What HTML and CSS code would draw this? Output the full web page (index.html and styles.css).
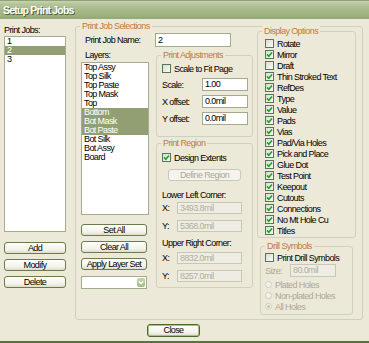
FILE: index.html
```html
<!DOCTYPE html>
<html lang="en">
<head>
    <meta charset="UTF-8">
    <title>Setup Print Jobs</title>
    <link rel="stylesheet" href="styles.css">
</head>
<body>
<div class="window">
    <div class="titlebar">Setup Print Jobs</div>

    <div class="content">
        <!-- print job list -->
        <div class="jobs-col">
            <div class="label">Print Jobs:</div>
            <div class="listbox jobs-list">
                <div class="item">1</div>
                <div class="item sel">2</div>
                <div class="item">3</div>
            </div>
            <div class="btn-stack">
                <div class="btn">Add</div>
                <div class="btn">Modify</div>
                <div class="btn">Delete</div>
            </div>
        </div>

        <div class="group main-group">
            <span class="group-title">Print Job Selections</span>

            <div class="left-area">
                <div class="name-row">
                    <span class="label name-label">Print Job Name:</span>
                    <div class="field name-field">2</div>
                </div>

                <div class="split">
                    <div class="layers-col">
                        <div class="label layers-label">Layers:</div>
                        <div class="listbox layers-list">
                            <div class="item">Top Assy</div>
                            <div class="item">Top Silk</div>
                            <div class="item">Top Paste</div>
                            <div class="item">Top Mask</div>
                            <div class="item">Top</div>
                            <div class="item sel">Bottom</div>
                            <div class="item sel">Bot Mask</div>
                            <div class="item sel">Bot Paste</div>
                            <div class="item">Bot Silk</div>
                            <div class="item">Bot Assy</div>
                            <div class="item">Board</div>
                        </div>
                        <div class="btn layer-btn first">Set All</div>
                        <div class="btn layer-btn">Clear All</div>
                        <div class="btn layer-btn">Apply Layer Set</div>
                        <div class="combo">
                            <span class="combo-arrow">
                                <svg width="6" height="5" viewBox="0 0 6 5"><path d="M0.8 1.2 L3 3.6 L5.2 1.2" fill="none" stroke="#fff" stroke-width="1.4"/></svg>
                            </span>
                        </div>
                    </div>

                    <div class="mid-col">
                        <div class="group adjust-group">
                            <span class="group-title">Print Adjustments</span>
                            <div class="check-row">
                                <span class="cb"></span>Scale to Fit Page
                            </div>
                            <div class="field-row">
                                <span class="row-label">Scale:</span>
                                <div class="field small-field">1.00</div>
                            </div>
                            <div class="field-row">
                                <span class="row-label">X offset:</span>
                                <div class="field small-field">0.0mil</div>
                            </div>
                            <div class="field-row">
                                <span class="row-label">Y offset:</span>
                                <div class="field small-field">0.0mil</div>
                            </div>
                        </div>

                        <div class="group region-group">
                            <span class="group-title">Print Region</span>
                            <div class="check-row">
                                <span class="cb on"><svg width="7" height="7" viewBox="0 0 7 7"><path d="M1 3.4 L2.8 5.2 L6 1.4" fill="none" stroke="#21a121" stroke-width="1.6"/></svg></span>Design Extents
                            </div>
                            <div class="btn disabled define-btn">Define Region</div>
                            <div class="label corner-label">Lower Left Corner:</div>
                            <div class="coord-row first">
                                <span class="coord-label">X:</span>
                                <div class="field disabled coord-field">3493.8mil</div>
                            </div>
                            <div class="coord-row">
                                <span class="coord-label">Y:</span>
                                <div class="field disabled coord-field">5368.0mil</div>
                            </div>
                            <div class="label corner-label upper">Upper Right Corner:</div>
                            <div class="coord-row second">
                                <span class="coord-label">X:</span>
                                <div class="field disabled coord-field">8832.0mil</div>
                            </div>
                            <div class="coord-row">
                                <span class="coord-label">Y:</span>
                                <div class="field disabled coord-field">8257.0mil</div>
                            </div>
                        </div>
                    </div>
                </div>
            </div>

            <div class="right-area">
                <div class="group display-group">
                    <span class="group-title">Display Options</span>
                    <div class="opt"><span class="cb"></span>Rotate</div>
                    <div class="opt"><span class="cb on"><svg width="7" height="7" viewBox="0 0 7 7"><path d="M1 3.4 L2.8 5.2 L6 1.4" fill="none" stroke="#21a121" stroke-width="1.6"/></svg></span>Mirror</div>
                    <div class="opt"><span class="cb"></span>Draft</div>
                    <div class="opt"><span class="cb on"><svg width="7" height="7" viewBox="0 0 7 7"><path d="M1 3.4 L2.8 5.2 L6 1.4" fill="none" stroke="#21a121" stroke-width="1.6"/></svg></span>Thin Stroked Text</div>
                    <div class="opt"><span class="cb on"><svg width="7" height="7" viewBox="0 0 7 7"><path d="M1 3.4 L2.8 5.2 L6 1.4" fill="none" stroke="#21a121" stroke-width="1.6"/></svg></span>RefDes</div>
                    <div class="opt"><span class="cb on"><svg width="7" height="7" viewBox="0 0 7 7"><path d="M1 3.4 L2.8 5.2 L6 1.4" fill="none" stroke="#21a121" stroke-width="1.6"/></svg></span>Type</div>
                    <div class="opt"><span class="cb on"><svg width="7" height="7" viewBox="0 0 7 7"><path d="M1 3.4 L2.8 5.2 L6 1.4" fill="none" stroke="#21a121" stroke-width="1.6"/></svg></span>Value</div>
                    <div class="opt"><span class="cb on"><svg width="7" height="7" viewBox="0 0 7 7"><path d="M1 3.4 L2.8 5.2 L6 1.4" fill="none" stroke="#21a121" stroke-width="1.6"/></svg></span>Pads</div>
                    <div class="opt"><span class="cb on"><svg width="7" height="7" viewBox="0 0 7 7"><path d="M1 3.4 L2.8 5.2 L6 1.4" fill="none" stroke="#21a121" stroke-width="1.6"/></svg></span>Vias</div>
                    <div class="opt"><span class="cb on"><svg width="7" height="7" viewBox="0 0 7 7"><path d="M1 3.4 L2.8 5.2 L6 1.4" fill="none" stroke="#21a121" stroke-width="1.6"/></svg></span>Pad/Via Holes</div>
                    <div class="opt"><span class="cb on"><svg width="7" height="7" viewBox="0 0 7 7"><path d="M1 3.4 L2.8 5.2 L6 1.4" fill="none" stroke="#21a121" stroke-width="1.6"/></svg></span>Pick and Place</div>
                    <div class="opt"><span class="cb on"><svg width="7" height="7" viewBox="0 0 7 7"><path d="M1 3.4 L2.8 5.2 L6 1.4" fill="none" stroke="#21a121" stroke-width="1.6"/></svg></span>Glue Dot</div>
                    <div class="opt"><span class="cb on"><svg width="7" height="7" viewBox="0 0 7 7"><path d="M1 3.4 L2.8 5.2 L6 1.4" fill="none" stroke="#21a121" stroke-width="1.6"/></svg></span>Test Point</div>
                    <div class="opt"><span class="cb on"><svg width="7" height="7" viewBox="0 0 7 7"><path d="M1 3.4 L2.8 5.2 L6 1.4" fill="none" stroke="#21a121" stroke-width="1.6"/></svg></span>Keepout</div>
                    <div class="opt"><span class="cb on"><svg width="7" height="7" viewBox="0 0 7 7"><path d="M1 3.4 L2.8 5.2 L6 1.4" fill="none" stroke="#21a121" stroke-width="1.6"/></svg></span>Cutouts</div>
                    <div class="opt"><span class="cb on"><svg width="7" height="7" viewBox="0 0 7 7"><path d="M1 3.4 L2.8 5.2 L6 1.4" fill="none" stroke="#21a121" stroke-width="1.6"/></svg></span>Connections</div>
                    <div class="opt"><span class="cb on"><svg width="7" height="7" viewBox="0 0 7 7"><path d="M1 3.4 L2.8 5.2 L6 1.4" fill="none" stroke="#21a121" stroke-width="1.6"/></svg></span>No Mt Hole Cu</div>
                    <div class="opt"><span class="cb on"><svg width="7" height="7" viewBox="0 0 7 7"><path d="M1 3.4 L2.8 5.2 L6 1.4" fill="none" stroke="#21a121" stroke-width="1.6"/></svg></span>Titles</div>
                </div>

                <div class="group drill-group">
                    <span class="group-title">Drill Symbols</span>
                    <div class="check-row"><span class="cb"></span>Print Drill Symbols</div>
                    <div class="size-row">
                        <span class="size-label">Size:</span>
                        <div class="field disabled small-field">80.0mil</div>
                    </div>
                    <div class="radio-row"><span class="rb"></span>Plated Holes</div>
                    <div class="radio-row"><span class="rb"></span>Non-plated Holes</div>
                    <div class="radio-row"><span class="rb on"></span>All Holes</div>
                </div>
            </div>
        </div>
    </div>

    <div class="footer">
        <div class="btn default">Close</div>
    </div>
</div>
</body>
</html>
```

FILE: styles.css
```css
* {
    box-sizing: border-box;
}
body {
    margin: 0;
    font-family: "Liberation Sans", Arial, sans-serif;
    font-size: 9px;
    letter-spacing: -0.6px;
    color: #000;
}
.window {
    width: 369px;
    height: 343px;
    background-color: #ece9d8;
    border-bottom: 2px solid #587240;
    display: flex;
    flex-direction: column;
}
.titlebar {
    height: 19px;
    flex: none;
    padding: 1px 3px 0;
    line-height: 18px;
    font-size: 10.5px;
    font-weight: bold;
    letter-spacing: -0.8px;
    color: #fff;
    text-shadow: 1px 1px 0 #4f603a;
    background: linear-gradient(to bottom, #55703a 0, #c8d4b0 1px, #b4c59a 4px, #a6b98a 10px, #9bb07e 16px, #92a875 19px);
}
.content {
    display: flex;
    gap: 9px;
    padding: 7px 6px 0 4px;
}

/* lists */
.label {
    line-height: 10px;
}
.listbox {
    background-color: #fff;
    border: 1px solid #a5ac93;
}
.item {
    height: 9px;
    line-height: 9px;
    padding-left: 2px;
    white-space: nowrap;
}
.item.sel {
    background-color: #919f73;
    color: #fff;
}

/* left column */
.jobs-col {
    width: 62px;
    display: flex;
    flex-direction: column;
}
.jobs-col .label {
    margin-top: -1px;
}
.jobs-list {
    height: 196px;
    margin-top: 1px;
}
.btn-stack {
    display: flex;
    flex-direction: column;
    gap: 5px;
    margin-top: 10px;
}

/* buttons */
.btn {
    height: 12px;
    line-height: 10px;
    text-align: center;
    border: 1px solid #6b7b4e;
    border-radius: 3px;
    background: linear-gradient(to bottom, #fefefb 0%, #f3f2ea 70%, #dedbcc 100%);
    white-space: nowrap;
}
.btn.disabled {
    border-color: #cac8bb;
    background: #f4f3ec;
    color: #aca899;
}
.btn.default {
    width: 53px;
    height: 13px;
    line-height: 11px;
    margin-left: 147px;
    border-color: #4d6a2d;
    box-shadow: inset 0 0 0 1px #a9c17d;
}

/* group boxes */
.group {
    position: relative;
    border: 1px solid #d0d0bf;
    border-radius: 3px;
}
.group-title {
    position: absolute;
    top: -6px;
    left: 4px;
    padding: 0 2px;
    line-height: 10px;
    color: #c07a40;
    background-color: #ece9d8;
    white-space: nowrap;
}
.main-group {
    width: 288px;
    height: 294px;
    display: flex;
    gap: 4px;
    padding: 4px 6px 0 5px;
}
.left-area {
    width: 172px;
    padding-top: 2px;
}
.name-row {
    display: flex;
    align-items: center;
    height: 14px;
}
.name-label {
    width: 74px;
    padding-left: 4px;
}
.field {
    background-color: #fff;
    border: 1px solid #a2ab8e;
    padding-left: 2px;
    white-space: nowrap;
}
.field.disabled {
    background-color: #efede3;
    border-color: #c6c7b6;
    color: #b0ad9e;
}
.name-field {
    width: 76px;
    height: 14px;
    line-height: 12px;
}
.split {
    display: flex;
    gap: 7px;
    margin-top: 3px;
}

/* layers */
.layers-col {
    width: 68px;
    display: flex;
    flex-direction: column;
}
.layers-label {
    padding-left: 4px;
}
.layers-list {
    height: 153px;
    margin-top: 2px;
}
.layer-btn {
    width: 66px;
    margin-top: 5px;
}
.layer-btn.first {
    margin-top: 9px;
}
.combo {
    width: 66px;
    height: 13px;
    margin-top: 6px;
    border: 1px solid #a2ab8e;
    background-color: #fff;
    display: flex;
    justify-content: flex-end;
    padding: 1px;
}
.combo-arrow {
    width: 8px;
    display: flex;
    align-items: center;
    justify-content: center;
    background: linear-gradient(to bottom, #c4d4ac, #a4bb85);
    border-radius: 2px;
}

/* middle column */
.mid-col {
    width: 97px;
    padding-top: 5px;
}
.check-row {
    display: flex;
    align-items: center;
    gap: 3px;
    height: 9px;
    white-space: nowrap;
}
.cb {
    width: 9px;
    height: 9px;
    flex: none;
    border: 1px solid #577659;
    background: linear-gradient(135deg, #dcdbd2, #fbfbf8);
    display: flex;
    align-items: center;
    justify-content: center;
}
.adjust-group {
    height: 82px;
    padding: 8px 0 0 5px;
}
.field-row {
    display: flex;
    align-items: center;
    margin-top: 4px;
}
.adjust-group .field-row:nth-of-type(2) {
    margin-top: 5px;
}
.row-label {
    width: 40px;
    white-space: nowrap;
}
.small-field {
    width: 46px;
    height: 13px;
    line-height: 11px;
}
.region-group {
    height: 145px;
    margin-top: 6px;
    padding: 9px 0 0 5px;
}
.define-btn {
    width: 73px;
    margin: 7px 0 0 6px;
}
.corner-label {
    margin-top: 9px;
    white-space: nowrap;
}
.corner-label.upper {
    margin-top: 6px;
}
.coord-row {
    display: flex;
    align-items: center;
    margin-top: 6px;
}
.coord-row.first {
    margin-top: 2px;
}
.coord-row.second {
    margin-top: 4px;
}
.coord-label {
    width: 15px;
}
.coord-field {
    width: 65px;
    height: 12px;
    line-height: 10px;
}

/* right column */
.right-area {
    width: 99px;
    display: flex;
    flex-direction: column;
}
.display-group {
    height: 207px;
    padding: 6px 0 0 7px;
}
.opt {
    display: flex;
    align-items: center;
    gap: 3px;
    height: 11px;
    white-space: nowrap;
}
.drill-group {
    height: 69px;
    margin: 8px 3px 0;
    padding: 6px 0 0 4px;
}
.size-row {
    display: flex;
    align-items: center;
    margin-top: 2px;
}
.size-label {
    width: 25px;
    color: #aca899;
}
.radio-row {
    display: flex;
    align-items: center;
    gap: 3px;
    height: 11px;
    color: #aca899;
    white-space: nowrap;
}
.size-row + .radio-row {
    margin-top: 2px;
}
.rb {
    width: 7px;
    height: 7px;
    border-radius: 50%;
    border: 1px solid #cfcdc0;
    background-color: #f3f2ea;
    display: flex;
    align-items: center;
    justify-content: center;
}
.rb.on::after {
    content: "";
    width: 3px;
    height: 3px;
    border-radius: 50%;
    background-color: #c4c2b4;
}

.footer {
    flex: 1;
    padding-top: 4px;
}
```
